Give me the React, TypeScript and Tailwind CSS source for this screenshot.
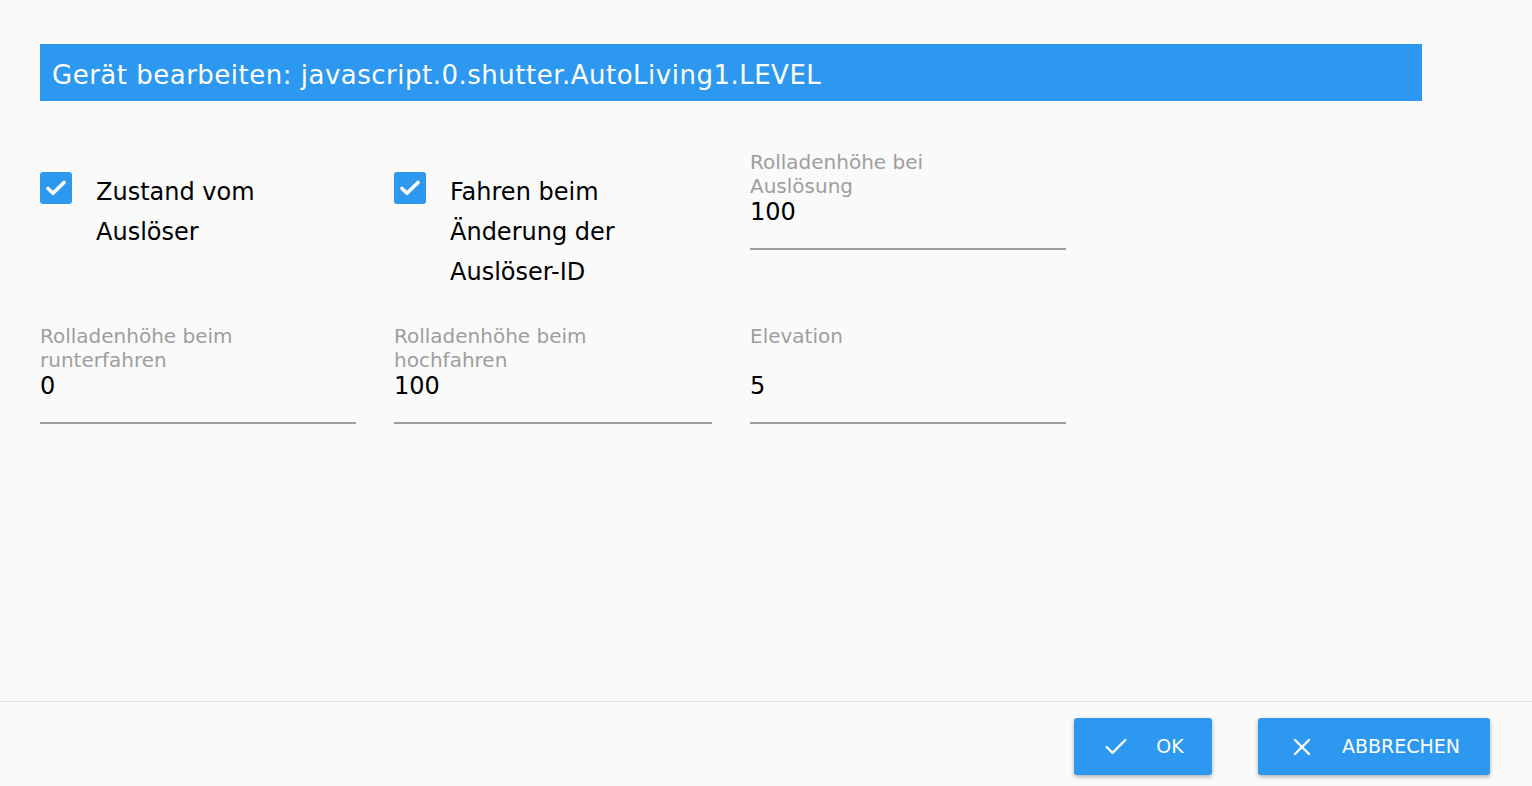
import { Check, X } from "lucide-react";

interface Field {
    label: string;
    value: string;
}

function CheckItem({ lines }: { lines: string[] }) {
    return (
        <div className="flex items-start pt-[22px]">
            <div className="w-8 h-8 rounded-[3px] bg-[#2c98f0] flex items-center justify-center shrink-0">
                <svg width="24" height="24" viewBox="0 0 24 24">
                    <path d="M4 12.5l5 4.8L20 6.5" fill="none" stroke="white" strokeWidth="3.6" strokeLinecap="round" strokeLinejoin="round" />
                </svg>
            </div>
            <div className="ml-[24px] text-[24px] leading-[40px] text-black">
                {lines.map((l) => <div key={l}>{l}</div>)}
            </div>
        </div>
    );
}

function TextField({ field }: { field: Field }) {
    return (
        <div className="flex flex-col">
            <div className="h-[48px] max-w-[240px] text-[20px] leading-[24px] text-[#9e9e9e]">{field.label}</div>
            <div className="h-[52px] text-[24px] leading-[28px] text-black border-b-2 border-[#9e9e9e]">{field.value}</div>
        </div>
    );
}

export default function App() {
    const row2: Field[] = [
        { label: "Rolladenhöhe beim runterfahren", value: "0" },
        { label: "Rolladenhöhe beim hochfahren", value: "100" },
        { label: "Elevation", value: "5" },
    ];
    return (
        <div className="w-[1532px] h-[786px] bg-[#fafafa] flex flex-col overflow-hidden" style={{ fontFamily: '"DejaVu Sans", sans-serif' }}>
            <div className="flex-1 px-10 pt-11">
                <div className="w-[1382px] h-[57px] bg-[#2c98f0] flex items-center px-3 pt-[5px] text-white text-[26px] tracking-[0.5px]">
                    Gerät bearbeiten: javascript.0.shutter.AutoLiving1.LEVEL
                </div>
                <div className="grid grid-cols-[316px_318px_316px] gap-x-[38px] mt-[49px]">
                    <CheckItem lines={["Zustand vom", "Auslöser"]} />
                    <CheckItem lines={["Fahren beim", "Änderung der", "Auslöser-ID"]} />
                    <TextField field={{ label: "Rolladenhöhe bei Auslösung", value: "100" }} />
                </div>
                <div className="grid grid-cols-[316px_318px_316px] gap-x-[38px] mt-[32px]">
                    {row2.map((f) => <TextField key={f.label} field={f} />)}
                </div>
            </div>
            <div className="h-[85px] border-t border-[#e0e0e0] flex justify-end items-start pt-4 pr-[42px] gap-[46px]">
                <button className="w-[138px] h-[57px] rounded-[3px] bg-[#2c98f0] text-white shadow-[0_2px_4px_rgba(0,0,0,0.3)] flex items-center justify-center gap-[26px] text-[19px] font-medium">
                    <Check size={28} strokeWidth={2} />
                    <span>OK</span>
                </button>
                <button className="w-[232px] h-[57px] rounded-[3px] bg-[#2c98f0] text-white shadow-[0_2px_4px_rgba(0,0,0,0.3)] flex items-center justify-center gap-[26px] text-[19px] font-medium">
                    <X size={28} strokeWidth={2} />
                    <span>ABBRECHEN</span>
                </button>
            </div>
        </div>
    );
}
